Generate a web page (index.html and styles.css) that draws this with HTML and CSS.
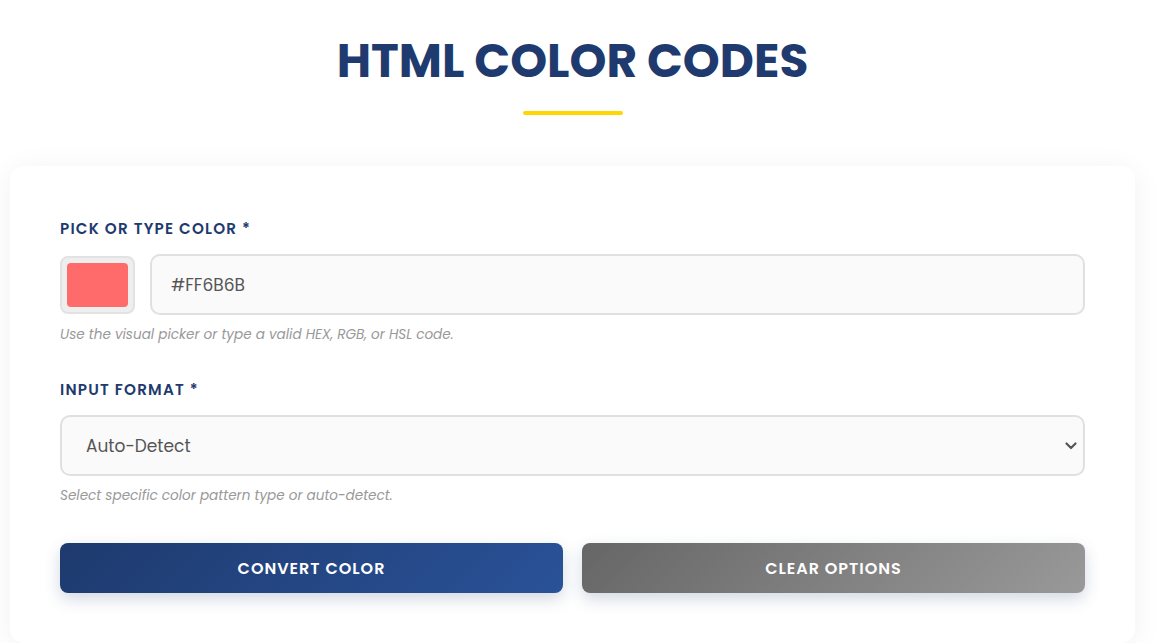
FILE: index.html
```html
<!DOCTYPE html>
<html>
<head>
    <meta charset="UTF-8">
    <title>HTML Color Codes</title>
    <link rel="stylesheet" href="styles.css">
</head>
<body>
    <div class="page">
        <div class="header">
            <h1 class="title">HTML COLOR CODES</h1>
            <span class="title-line"></span>
        </div>
        <div class="card">
            <div class="field">
                <label class="label">PICK OR TYPE COLOR *</label>
                <div class="color-row">
                    <span class="swatch"><span class="swatch-fill"></span></span>
                    <input class="text-input" type="text" value="#FF6B6B">
                </div>
                <p class="hint">Use the visual picker or type a valid HEX, RGB, or HSL code.</p>
            </div>
            <div class="field">
                <label class="label">INPUT FORMAT *</label>
                <div class="select-box">
                    <span class="select-text">Auto-Detect</span>
                    <svg class="chevron" width="12" height="8" viewBox="0 0 12 8">
                        <path d="M1.5 1.5 L6 6 L10.5 1.5" fill="none" stroke="#555" stroke-width="2.2" stroke-linecap="round" stroke-linejoin="round"/>
                    </svg>
                </div>
                <p class="hint">Select specific color pattern type or auto-detect.</p>
            </div>
            <div class="buttons">
                <span class="btn btn-primary">CONVERT COLOR</span>
                <span class="btn btn-secondary">CLEAR OPTIONS</span>
            </div>
        </div>
    </div>
</body>
</html>
```

FILE: styles.css
```css
* {
    margin: 0;
    padding: 0;
    box-sizing: border-box;
}
body {
    background: #fff;
    font-family: Poppins, Inter, "Noto Sans", sans-serif;
    color: #333;
}
.page {
    width: 1125px;
    margin-left: 10px;
}
.header {
    display: flex;
    flex-direction: column;
    align-items: center;
    padding-top: 32px;
    height: 166px;
}
.title {
    font-size: 47px;
    font-weight: 700;
    color: #1e3a6e;
    letter-spacing: 0;
    line-height: 58px;
}
.title-line {
    display: block;
    width: 100px;
    height: 4px;
    border-radius: 2px;
    background: #ffd700;
    margin-top: 21px;
}
.card {
    background: #fff;
    border-radius: 14px;
    box-shadow: 0 4px 30px rgba(0, 0, 0, 0.06);
    padding: 50px 50px 50px 50px;
}
.field {
    margin-bottom: 32px;
}
.label {
    display: block;
    font-size: 15.2px;
    font-weight: 600;
    letter-spacing: 1.2px;
    color: #1e3a6e;
    line-height: 22px;
    padding-top: 2px;
    margin-bottom: 14px;
}
.color-row {
    display: flex;
    align-items: center;
    gap: 15px;
}
.swatch {
    display: flex;
    width: 75px;
    height: 58px;
    flex-shrink: 0;
    padding: 5px;
    background: #eee;
    border: 2px solid #e2e2e2;
    border-radius: 8px;
}
.swatch-fill {
    flex: 1;
    background: #ff6b6b;
    border-radius: 4px;
}
.text-input {
    flex: 1;
    height: 61px;
    border: 2px solid #e0e0e0;
    border-radius: 10px;
    background: #fafafa;
    padding: 0 19px;
    font-family: inherit;
    font-size: 17px;
    color: #555;
    outline: none;
}
.hint {
    font-size: 13.6px;
    font-style: italic;
    color: #999;
    line-height: 20px;
    margin-top: 10px;
}
.select-box {
    display: flex;
    align-items: center;
    justify-content: space-between;
    height: 61px;
    border: 2px solid #e0e0e0;
    border-radius: 10px;
    background: #fafafa;
    padding: 0 6px 0 24px;
}
.select-text {
    font-size: 17px;
    color: #555;
}
.buttons {
    display: flex;
    gap: 19px;
    margin-top: 37px;
}
.btn {
    flex: 1;
    display: flex;
    align-items: center;
    justify-content: center;
    height: 50px;
    border-radius: 8px;
    color: #fff;
    font-size: 16px;
    font-weight: 600;
    letter-spacing: 1px;
    box-shadow: 0 6px 16px rgba(30, 58, 110, 0.2);
    cursor: pointer;
}
.btn-primary {
    background: linear-gradient(135deg, #1e3a6e, #2a5298);
}
.btn-secondary {
    background: linear-gradient(135deg, #666, #999);
}
```
